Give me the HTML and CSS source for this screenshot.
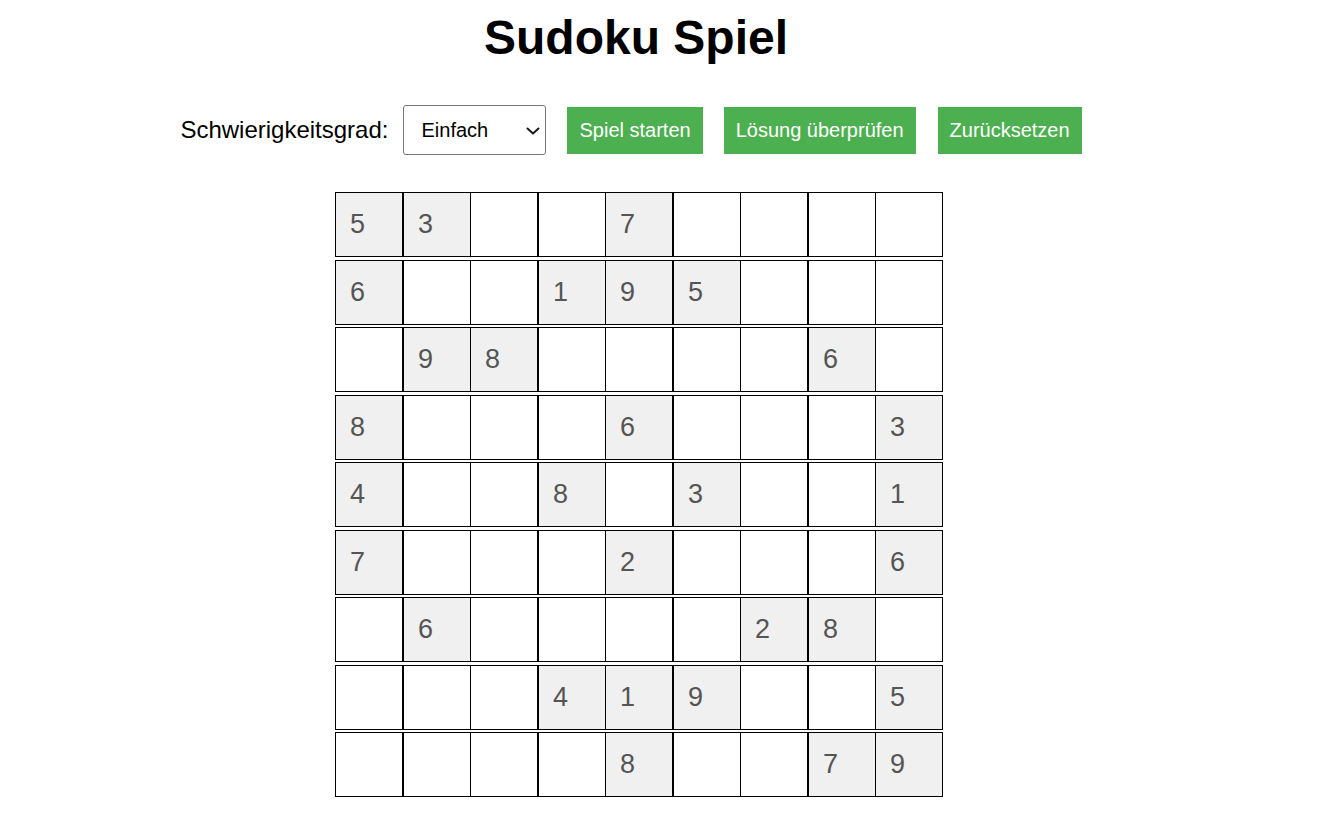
FILE: index.html
```html
<!DOCTYPE html>
<html lang="de">
<head>
<meta charset="utf-8">
<title>Sudoku Spiel</title>
<link rel="stylesheet" href="styles.css">
</head>
<body>
<div class="page">
  <h1 class="title">Sudoku Spiel</h1>
  <div class="controls">
    <label class="level-label" for="level">Schwierigkeitsgrad:</label>
    <span class="select-wrap">
      <select id="level" class="level-select">
        <option>Einfach</option>
        <option>Mittel</option>
        <option>Schwer</option>
      </select>
      <svg class="select-arrow" width="14" height="8" viewBox="0 0 14 8" aria-hidden="true">
        <path d="M1.5 1.5 L7 6.5 L12.5 1.5" fill="none" stroke="#1a1a1a" stroke-width="2" stroke-linecap="round" stroke-linejoin="round"/>
      </svg>
    </span>
    <button class="btn">Spiel starten</button>
    <button class="btn">Lösung überprüfen</button>
    <button class="btn btn-last">Zurücksetzen</button>
  </div>
  <div class="board-wrap">
    <div class="board">
      <input class="cell given" value="5" readonly><input class="cell given" value="3" readonly><input class="cell"><input class="cell"><input class="cell given" value="7" readonly><input class="cell"><input class="cell"><input class="cell"><input class="cell">
      <input class="cell given" value="6" readonly><input class="cell"><input class="cell"><input class="cell given" value="1" readonly><input class="cell given" value="9" readonly><input class="cell given" value="5" readonly><input class="cell"><input class="cell"><input class="cell">
      <input class="cell"><input class="cell given" value="9" readonly><input class="cell given" value="8" readonly><input class="cell"><input class="cell"><input class="cell"><input class="cell"><input class="cell given" value="6" readonly><input class="cell">
      <input class="cell given" value="8" readonly><input class="cell"><input class="cell"><input class="cell"><input class="cell given" value="6" readonly><input class="cell"><input class="cell"><input class="cell"><input class="cell given" value="3" readonly>
      <input class="cell given" value="4" readonly><input class="cell"><input class="cell"><input class="cell given" value="8" readonly><input class="cell"><input class="cell given" value="3" readonly><input class="cell"><input class="cell"><input class="cell given" value="1" readonly>
      <input class="cell given" value="7" readonly><input class="cell"><input class="cell"><input class="cell"><input class="cell given" value="2" readonly><input class="cell"><input class="cell"><input class="cell"><input class="cell given" value="6" readonly>
      <input class="cell"><input class="cell given" value="6" readonly><input class="cell"><input class="cell"><input class="cell"><input class="cell"><input class="cell given" value="2" readonly><input class="cell given" value="8" readonly><input class="cell">
      <input class="cell"><input class="cell"><input class="cell"><input class="cell given" value="4" readonly><input class="cell given" value="1" readonly><input class="cell given" value="9" readonly><input class="cell"><input class="cell"><input class="cell given" value="5" readonly>
      <input class="cell"><input class="cell"><input class="cell"><input class="cell"><input class="cell given" value="8" readonly><input class="cell"><input class="cell"><input class="cell given" value="7" readonly><input class="cell given" value="9" readonly>
    </div>
  </div>
</div>
</body>
</html>
```

FILE: styles.css
```css
html, body {
  margin: 0;
  padding: 0;
  background: #ffffff;
}

body {
  font-family: "Liberation Sans", Arial, sans-serif;
  color: #000000;
}

.page {
  width: 1256px;
  margin-left: 8px;
  padding-top: 10px;
}

.title {
  margin: 0;
  text-align: center;
  font-size: 48px;
  line-height: 55px;
  font-weight: bold;
}

.controls {
  display: flex;
  align-items: center;
  justify-content: center;
  margin-top: 40px;
  padding-right: 10px;
}

.level-label {
  font-size: 24px;
  margin-right: 15px;
}

.select-wrap {
  position: relative;
  display: inline-flex;
}

.level-select {
  -webkit-appearance: none;
  appearance: none;
  width: 143px;
  height: 50px;
  box-sizing: border-box;
  margin: 0;
  font-family: "Liberation Sans", Arial, sans-serif;
  font-size: 20px;
  color: #000000;
  padding: 0 30px 0 17px;
  border: 1px solid #767676;
  border-radius: 3px;
  background-color: #ffffff;
}

.select-arrow {
  position: absolute;
  left: 123px;
  top: 22px;
  pointer-events: none;
}

.btn {
  margin-left: 21px;
  padding: 12px;
  border: none;
  background-color: #4caf50;
  color: #ffffff;
  font-family: "Liberation Sans", Arial, sans-serif;
  font-size: 20px;
  line-height: 23px;
  cursor: pointer;
}

.btn-last {
  margin-left: 22px;
}

.board-wrap {
  display: flex;
  justify-content: center;
  padding-left: 6px;
  margin-top: 37px;
}

.board {
  display: grid;
  grid-template-columns: 68px 67px 68px 67px 68px 67px 68px 67px 68px;
  grid-template-rows: 68px 67px 68px 67px 68px 67px 68px 67px 65px;
}

.cell {
  width: 68px;
  height: 65px;
  box-sizing: border-box;
  margin: 0;
  padding: 0 0 0 14px;
  border: 1px solid #000000;
  background: #ffffff;
  font-family: "Liberation Sans", Arial, sans-serif;
  font-size: 27px;
  color: #555555;
  outline: none;
}

.cell.given {
  background: #f0f0f0;
}
```
